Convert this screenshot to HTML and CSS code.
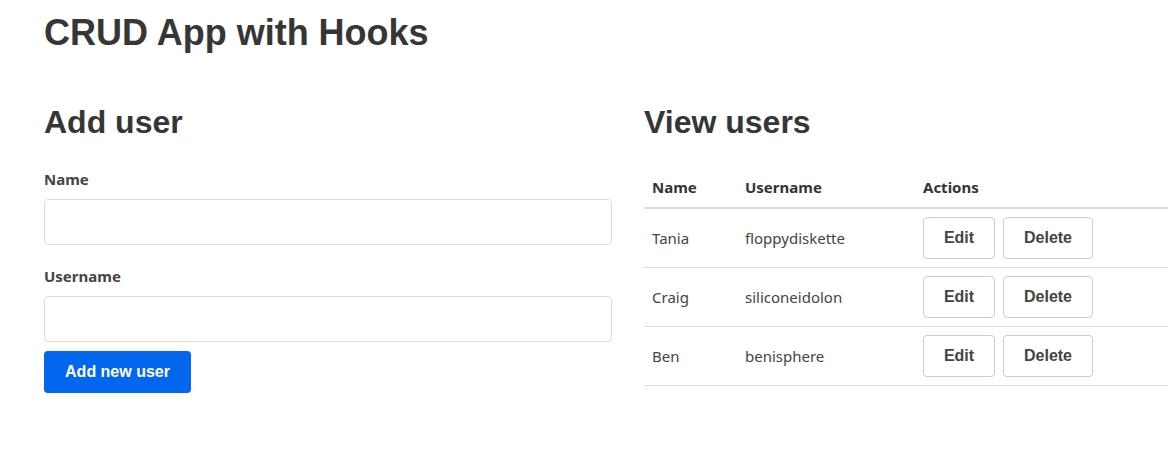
FILE: index.html
```html
<!DOCTYPE html>
<html>
<head>
<meta charset="utf-8">
<link rel="stylesheet" href="styles.css">
</head>
<body>
<div class="container">
  <h1 class="title">CRUD App with Hooks</h1>
  <div class="row">
    <div class="col">
      <h2 class="subtitle">Add user</h2>
      <form class="form">
        <label class="label">Name</label>
        <input class="input" type="text">
        <label class="label label-second">Username</label>
        <input class="input" type="text">
        <button class="btn-primary" type="button">Add new user</button>
      </form>
    </div>
    <div class="col">
      <h2 class="subtitle">View users</h2>
      <table class="table">
        <thead>
          <tr><th class="c-name">Name</th><th class="c-user">Username</th><th>Actions</th></tr>
        </thead>
        <tbody>
          <tr><td>Tania</td><td>floppydiskette</td><td><button class="btn btn-edit">Edit</button><button class="btn btn-del">Delete</button></td></tr>
          <tr><td>Craig</td><td>siliconeidolon</td><td><button class="btn btn-edit">Edit</button><button class="btn btn-del">Delete</button></td></tr>
          <tr><td>Ben</td><td>benisphere</td><td><button class="btn btn-edit">Edit</button><button class="btn btn-del">Delete</button></td></tr>
        </tbody>
      </table>
    </div>
  </div>
</div>
</body>
</html>
```
FILE: styles.css
```css
html, body {
  margin: 0;
  padding: 0;
  background: #fff;
  overflow: hidden;
}
body {
  font-family: "Noto Sans", "Open Sans", sans-serif;
  color: #444;
  font-size: 15px;
}
.container {
  width: 1168px;
  padding: 0 0 0 44px;
  box-sizing: border-box;
}
.title {
  font-family: "Liberation Sans", Arial, sans-serif;
  font-weight: 700;
  font-size: 36px;
  line-height: 44px;
  color: #363636;
  margin: 11px 0 0 0;
}
.row {
  display: flex;
  gap: 32px;
  margin-top: 47px;
}
.col {
  flex: 0 0 568px;
  width: 568px;
}
.subtitle {
  font-family: "Liberation Sans", Arial, sans-serif;
  font-weight: 700;
  font-size: 32px;
  line-height: 40px;
  color: #363636;
  margin: 0;
}
.form {
  display: flex;
  flex-direction: column;
  margin-top: 26px;
}
.label {
  font-weight: 700;
  font-size: 15px;
  line-height: 22px;
  color: #444;
  margin-bottom: 9px;
}
.label-second {
  margin-top: 20px;
}
.input {
  height: 46px;
  box-sizing: border-box;
  border: 1px solid #ddd;
  border-radius: 4px;
  padding: 0 12px;
  font-size: 16px;
  width: 100%;
}
.btn-primary {
  align-self: flex-start;
  margin-top: 9px;
  height: 42px;
  width: 147px;
  background: #0366ee;
  color: #fff;
  border: 0;
  border-radius: 4px;
  font-family: "Liberation Sans", Arial, sans-serif;
  font-weight: 700;
  font-size: 16px;
  padding: 0;
}
.table {
  width: 568px;
  border-collapse: collapse;
  margin-top: 25px;
}
.table th {
  text-align: left;
  font-weight: 700;
  font-size: 15px;
  padding: 8px 8px;
  line-height: 24px;
  border-bottom: 2px solid #ddd;
  color: #333;
}
.c-name { width: 77px; }
.c-user { width: 162px; }
.table td {
  padding: 8px 8px;
  font-size: 15px;
  line-height: 24px;
  border-bottom: 1px solid #ddd;
  height: 42px;
  color: #444;
  vertical-align: middle;
}
.btn {
  height: 42px;
  background: #fff;
  border: 1px solid #ccc;
  border-radius: 4px;
  font-family: "Liberation Sans", Arial, sans-serif;
  font-weight: 700;
  font-size: 16px;
  color: #444;
  padding: 0;
  vertical-align: middle;
}
.btn-edit { width: 72px; margin-right: 8px; }
.btn-del { width: 90px; }
```
